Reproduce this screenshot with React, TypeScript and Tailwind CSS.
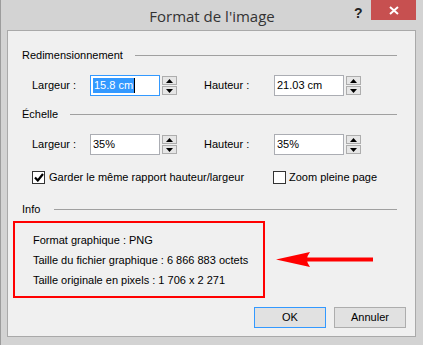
import React from "react";

const ui = { fontFamily: '"Liberation Sans", Arial, sans-serif' };

function Spinner() {
  return (
    <div className="ml-[2px] flex h-[21px] w-[15px] shrink-0 flex-col justify-between py-px">
      <div className="flex h-[9px] items-center justify-center border border-[#adadad] bg-[#e6e6e6]">
        <svg width="7" height="4" viewBox="0 0 7 4">
          <path d="M0 4 L3.5 0 L7 4 Z" fill="#000" />
        </svg>
      </div>
      <div className="flex h-[9px] items-center justify-center border border-[#adadad] bg-[#e6e6e6]">
        <svg width="7" height="4" viewBox="0 0 7 4">
          <path d="M0 0 L3.5 4 L7 0 Z" fill="#000" />
        </svg>
      </div>
    </div>
  );
}

function Field({
  value,
  selected = false,
}: {
  value: string;
  selected?: boolean;
}) {
  return (
    <div className="flex shrink-0 items-center">
      <div
        className={`flex h-[21px] w-[70px] items-center whitespace-nowrap border bg-white px-[2px] text-[11px] leading-none ${
          selected ? "border-[#3399ff]" : "border-[#abadb3]"
        }`}
      >
        {selected ? (
          <>
            <span className="bg-[#3399ff] px-px py-[2px] text-white">{value}</span>
            <span className="h-[15px] w-px bg-[#000]" />
          </>
        ) : (
          <span className="text-[#000]">{value}</span>
        )}
      </div>
      <Spinner />
    </div>
  );
}

function Section({ label, lineFrom }: { label: string; lineFrom: string }) {
  return (
    <div className="flex h-4 items-center">
      <span className="whitespace-nowrap text-[11px] text-[#000]">{label}</span>
      <div className={`h-px flex-1 bg-[#a0a0a0] ${lineFrom}`} />
    </div>
  );
}

function Row({
  left,
  right,
  focused,
}: {
  left: string;
  right: string;
  focused?: boolean;
}) {
  return (
    <div className="flex h-[21px] items-center whitespace-nowrap text-[11px] text-[#000]">
      <span className="w-[68px] shrink-0 pl-[10px]">Largeur :</span>
      <Field value={left} selected={focused} />
      <span className="ml-[27px] w-[70px] shrink-0">Hauteur :</span>
      <Field value={right} />
    </div>
  );
}

function CheckBox({ checked }: { checked?: boolean }) {
  return (
    <div className="flex h-[13px] w-[13px] shrink-0 items-center justify-center border border-[#333] bg-white">
      {checked && (
        <svg width="10" height="9" viewBox="0 0 10 9">
          <path d="M1 4.5 L3.8 7.5 L9 1" fill="none" stroke="#000" strokeWidth="2.2" />
        </svg>
      )}
    </div>
  );
}

export default function App() {
  return (
    <div
      className="flex h-[345px] w-[423px] flex-col border-l border-[#9c9c9c] bg-[#d3d3d3]"
      style={ui}
    >
      <div className="relative flex h-[30px] items-start justify-center">
        <span
          className="mt-[5px] text-[15px] text-[#333]"
          style={{ fontFamily: '"Open Sans", "Noto Sans", sans-serif' }}
        >
          Format de l'image
        </span>
        <span className="absolute left-[353px] top-[3px] text-[14px] font-bold text-[#222]">?</span>
        <div className="absolute left-[370px] top-0 flex h-[20px] w-[45px] items-center justify-center bg-[#c75050]">
          <svg width="10" height="9" viewBox="0 0 10 9">
            <path d="M1 1 L9 8 M9 1 L1 8" stroke="#fff" strokeWidth="2" />
          </svg>
        </div>
      </div>

      <div className="ml-[6px] h-[307px] w-[409px] border border-[#a9a9a9] bg-[#f0f0f0]">
        <div className="flex flex-col pl-[14px] pr-[18px] pt-4">
          <Section label="Redimensionnement" lineFrom="ml-[12px]" />
          <div className="mt-[12px]">
            <Row left="15.8 cm" right="21.03 cm" focused />
          </div>
          <div className="mt-[10px]">
            <Section label="Échelle" lineFrom="ml-[12px]" />
          </div>
          <div className="mt-[12px]">
            <Row left="35%" right="35%" />
          </div>
          <div className="mt-[16px] flex h-[13px] items-center whitespace-nowrap text-[11px] text-[#000]">
            <div className="ml-[10px]">
              <CheckBox checked />
            </div>
            <span className="ml-[4px] w-[224px] shrink-0">Garder le même rapport hauteur/largeur</span>
            <CheckBox />
            <span className="ml-[3px]">Zoom pleine page</span>
          </div>
          <div className="mt-[17px]">
            <Section label="Info" lineFrom="ml-[14px]" />
          </div>
        </div>

        <div className="mt-[4px] flex items-center pl-[5px]">
          <div className="flex h-[77px] w-[252px] shrink-0 flex-col justify-center gap-[6px] whitespace-nowrap border-2 border-[#ff0000] pl-[18px] text-[11px] text-[#000]">
            <span className="h-[14px] leading-[14px]">Format graphique : PNG</span>
            <span className="h-[14px] leading-[14px]">Taille du fichier graphique : 6 866 883 octets</span>
            <span className="h-[14px] leading-[14px]">Taille originale en pixels : 1 706 x 2 271</span>
          </div>
          <svg className="ml-[11px]" width="100" height="17" viewBox="0 0 100 17">
            <path d="M0 8.5 L34 1 Q28 8.5 34 16 Z" fill="#ff0000" />
            <rect x="26" y="6.5" width="71" height="4" fill="#ff0000" />
          </svg>
        </div>

        <div className="mt-[9px] flex justify-end gap-[8px] pr-[9px] text-[11px] text-[#000]">
          <div className="flex h-[21px] w-[72px] items-center justify-center border border-[#3399ff] bg-[#e1e1e1]">
            OK
          </div>
          <div className="flex h-[21px] w-[72px] items-center justify-center border border-[#adadad] bg-[#e1e1e1]">
            Annuler
          </div>
        </div>
      </div>
    </div>
  );
}
